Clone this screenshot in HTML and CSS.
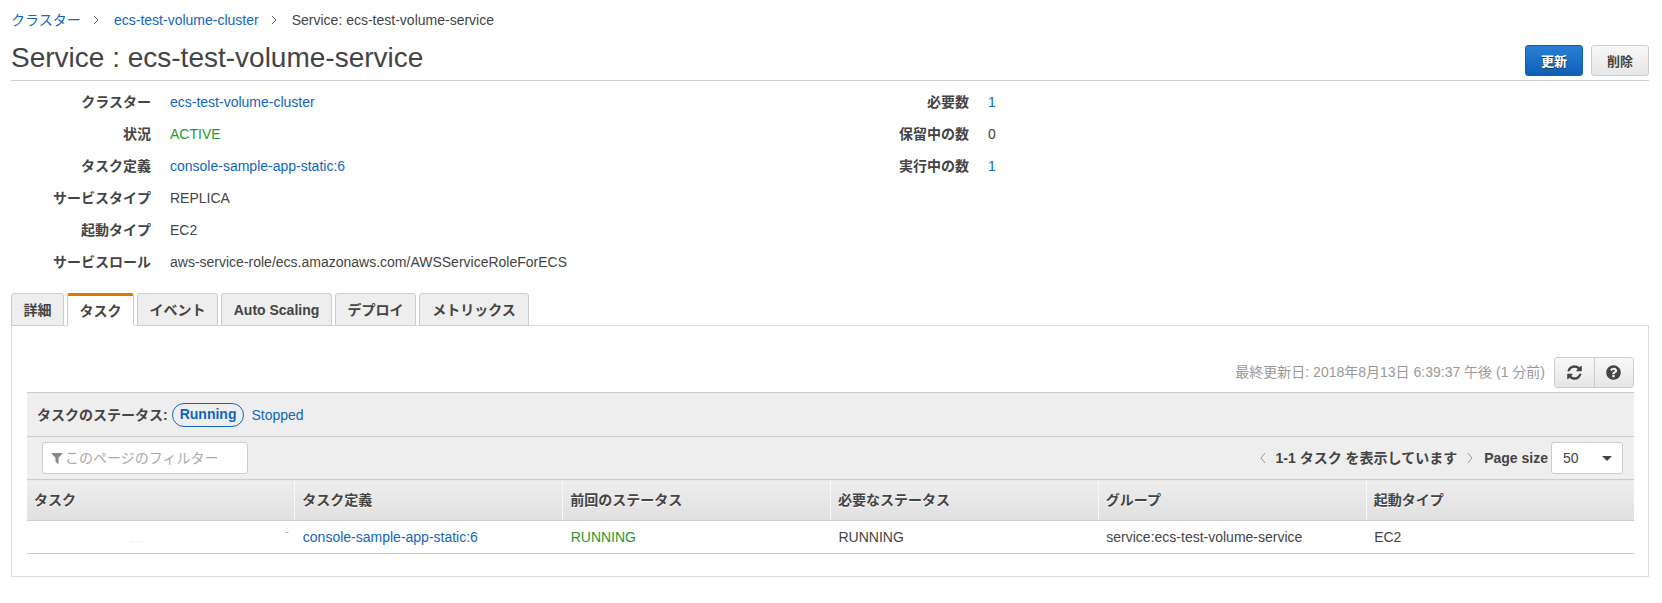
FILE: index.html
```html
<!DOCTYPE html>
<html lang="ja">
<head>
    <meta charset="UTF-8">
    <title>Service : ecs-test-volume-service</title>
    <link rel="stylesheet" href="styles.css">
</head>
<body>

    <div class="breadcrumb">
        <a href="#" class="crumb-first">クラスター</a>
        <svg class="crumb-sep" viewBox="0 0 8 10"><path d="M2 1l4 4-4 4" /></svg>
        <a href="#">ecs-test-volume-cluster</a>
        <svg class="crumb-sep" viewBox="0 0 8 10"><path d="M2 1l4 4-4 4" /></svg>
        <span>Service: ecs-test-volume-service</span>
    </div>

    <div class="page-head">
        <h1>Service : ecs-test-volume-service</h1>
        <div class="head-buttons">
            <button class="btn btn-primary">更新</button>
            <button class="btn">削除</button>
        </div>
    </div>

    <div class="detalles">
        <dl class="det-col">
            <dt>クラスター</dt><dd><a href="#">ecs-test-volume-cluster</a></dd>
            <dt>状況</dt><dd class="verde">ACTIVE</dd>
            <dt>タスク定義</dt><dd><a href="#">console-sample-app-static:6</a></dd>
            <dt>サービスタイプ</dt><dd>REPLICA</dd>
            <dt>起動タイプ</dt><dd>EC2</dd>
            <dt>サービスロール</dt><dd>aws-service-role/ecs.amazonaws.com/AWSServiceRoleForECS</dd>
        </dl>
        <dl class="det-col">
            <dt>必要数</dt><dd><a href="#">1</a></dd>
            <dt>保留中の数</dt><dd>0</dd>
            <dt>実行中の数</dt><dd><a href="#">1</a></dd>
        </dl>
    </div>

    <div class="tabs">
        <div class="tab tab-detalle">詳細</div>
        <div class="tab tab-active">タスク</div>
        <div class="tab tab-evento">イベント</div>
        <div class="tab tab-auto">Auto Scaling</div>
        <div class="tab tab-deploy">デプロイ</div>
        <div class="tab tab-metric">メトリックス</div>
    </div>

    <div class="panel">
        <div class="refresh-row">
            <span class="updated">最終更新日: 2018年8月13日 6:39:37 午後 (1 分前)</span>
            <div class="btn-group">
                <button class="icon-btn">
                    <svg viewBox="0 0 1792 1792"><path d="M1639 1056q0 5-1 7-64 268-268 434.5t-478 166.5q-146 0-282.5-55t-243.5-157l-129 129q-19 19-45 19t-45-19-19-45v-448q0-26 19-45t45-19h448q26 0 45 19t19 45-19 45l-137 137q71 66 161 102t187 36q134 0 250-65t186-179q11-17 53-117 8-23 30-23h192q13 0 22.5 9.5t9.5 22.5zm25-800v448q0 26-19 45t-45 19h-448q-26 0-45-19t-19-45 19-45l138-138q-148-137-349-137-134 0-250 65t-186 179q-11 17-53 117-8 23-30 23h-199q-13 0-22.5-9.5t-9.5-22.5v-7q65-268 270-434.5t480-166.5q146 0 284 55.5t245 156.5l130-129q19-19 45-19t45 19 19 45z"/></svg>
                </button>
                <button class="icon-btn">
                    <svg viewBox="0 0 1792 1792"><path d="M1024 1376v-192q0-14-9-23t-23-9h-192q-14 0-23 9t-9 23v192q0 14 9 23t23 9h192q14 0 23-9t9-23zm256-672q0-88-55.5-163t-138.5-116-170-41q-243 0-371 213-15 24 8 42l132 100q7 6 19 6 16 0 25-12 53-68 86-92 34-24 86-24 48 0 85.5 26t37.5 59q0 38-20 61t-68 45q-63 28-115.5 86.5t-52.5 125.5v36q0 14 9 23t23 9h192q14 0 23-9t9-23q0-19 21.5-49.5t54.5-49.5q32-18 49-28.5t46-35 44.5-48 28-60.5 12.5-81zm384 192q0 209-103 385.5t-279.5 279.5-385.5 103-385.5-103-279.5-279.5-103-385.5 103-385.5 279.5-279.5 385.5-103 385.5 103 279.5 279.5 103 385.5z"/></svg>
                </button>
            </div>
        </div>

        <div class="status-bar">
            <strong>タスクのステータス:</strong>
            <span class="pill">Running</span>
            <a href="#">Stopped</a>
        </div>

        <div class="filter-bar">
            <div class="filter-input">
                <svg viewBox="0 0 1792 1792"><path d="M1595 295q17 41-14 70l-493 493v742q0 42-39 59-13 5-25 5-27 0-45-19l-256-256q-19-19-19-45v-486l-493-493q-31-29-14-70 17-39 59-39h1280q42 0 59 39z"/></svg>
                <span>このページのフィルター</span>
            </div>
            <div class="pager">
                <svg class="pager-arrow" viewBox="0 0 8 12"><path d="M6 1L2 6l4 5" /></svg>
                <strong class="pager-text">1-1 タスク を表示しています</strong>
                <svg class="pager-arrow" viewBox="0 0 8 12"><path d="M2 1l4 5-4 5" /></svg>
                <strong class="page-size">Page size</strong>
                <div class="select"><span>50</span><i class="caret"></i></div>
            </div>
        </div>

        <table class="tabla">
            <thead>
                <tr>
                    <th>タスク</th>
                    <th>タスク定義</th>
                    <th>前回のステータス</th>
                    <th>必要なステータス</th>
                    <th>グループ</th>
                    <th>起動タイプ</th>
                </tr>
            </thead>
            <tbody>
                <tr>
                    <td class="oculto"><span class="resto">.....</span><span class="resto-fin">-</span></td>
                    <td><a href="#">console-sample-app-static:6</a></td>
                    <td class="verde">RUNNING</td>
                    <td>RUNNING</td>
                    <td>service:ecs-test-volume-service</td>
                    <td>EC2</td>
                </tr>
            </tbody>
        </table>
    </div>

</body>
</html>
```

FILE: styles.css
```css
* {
    box-sizing: border-box;
}

body {
    font-family: "Liberation Sans", "Noto Sans CJK JP", sans-serif;
    font-size: 14px;
    line-height: 20px;
    color: #444;
    margin: 0;
    padding: 0 13px 0 11px;
    background-color: #fff;
}

a {
    color: #1166bb;
    text-decoration: none;
}

.verde {
    color: #1d9a2e;
}

.breadcrumb {
    display: flex;
    align-items: center;
    height: 20px;
    margin-top: 10px;
    white-space: nowrap;
}

.crumb-first {
    width: 70px;
}

.crumb-sep {
    width: 8px;
    height: 10px;
    margin: 0 14px 0 11px;
    fill: none;
    stroke: #666;
    stroke-width: 1;
}

.page-head {
    display: flex;
    justify-content: space-between;
    align-items: flex-end;
    height: 51px;
    padding-bottom: 4px;
    border-bottom: 1px solid #ccc;
}

h1 {
    margin: 0;
    font-size: 28px;
    line-height: 36px;
    font-weight: 400;
}

.head-buttons {
    display: flex;
    gap: 8px;
}

.btn {
    width: 58px;
    height: 31px;
    padding: 0;
    font: bold 13px "Liberation Sans", "Noto Sans CJK JP", sans-serif;
    color: #444;
    background: linear-gradient(#f8f8f8, #e6e6e6);
    border: 1px solid #ccc;
    border-radius: 3px;
}

.btn-primary {
    color: #fff;
    background: linear-gradient(#2a7fd5, #0d60b5);
    border-color: #125fa8;
    text-shadow: 0 1px 1px #333;
}

.detalles {
    display: flex;
    margin-top: 5px;
    height: 192px;
}

.det-col {
    display: grid;
    grid-template-columns: 140px 1fr;
    grid-auto-rows: 32px;
    column-gap: 19px;
    align-items: center;
    align-content: start;
    width: 818px;
    margin: 0;
}

.det-col dt {
    text-align: right;
    font-weight: 700;
}

.det-col dd {
    margin: 0;
}

.tabs {
    display: flex;
    gap: 3px;
    margin-top: 15px;
    height: 33px;
    position: relative;
    z-index: 1;
}

.tab {
    padding: 0;
    text-align: center;
    line-height: 32px;
    font-weight: 700;
    font-size: 14px;
    color: #444;
    background: #eee;
    border: 1px solid #ccc;
    border-radius: 3px 3px 0 0;
}

.tab-detalle {
    width: 53px;
}

.tab-active {
    width: 67px;
    background: #fff;
    border-top: 3px solid #dd7700;
    border-bottom-color: #fff;
    line-height: 30px;
}

.tab-evento {
    width: 81px;
}

.tab-auto {
    width: 111px;
}

.tab-deploy {
    width: 81px;
}

.tab-metric {
    width: 110px;
}

.panel {
    margin-top: -1px;
    height: 252px;
    padding: 0 14px 0 15px;
    border: 1px solid #ddd;
}

.refresh-row {
    display: flex;
    justify-content: flex-end;
    align-items: center;
    gap: 9px;
    height: 66px;
    padding-top: 26px;
}

.updated {
    color: #999;
}

.btn-group {
    display: flex;
    width: 80px;
    height: 31px;
    border: 1px solid #ccc;
    border-radius: 3px;
    overflow: hidden;
}

.icon-btn {
    flex: 1;
    padding: 0;
    background: linear-gradient(#f8f8f8, #e6e6e6);
    border: none;
}

.icon-btn + .icon-btn {
    border-left: 1px solid #ccc;
}

.icon-btn svg {
    display: block;
    width: 17px;
    height: 17px;
    margin: 0 auto;
    fill: #444;
}

.status-bar {
    display: flex;
    align-items: center;
    height: 45px;
    padding-left: 10px;
    background: #eee;
    border-top: 1px solid #ccc;
    border-bottom: 1px solid #ccc;
}

.pill {
    margin: 0 7px 0 4px;
    padding: 0 7px;
    height: 24px;
    line-height: 21px;
    font-weight: 700;
    color: #1166bb;
    border: 1px solid #1166bb;
    border-radius: 12px;
}

.filter-bar {
    display: flex;
    justify-content: space-between;
    align-items: center;
    height: 42px;
    padding: 0 11px 0 15px;
    background: #eee;
}

.filter-input {
    display: flex;
    align-items: center;
    gap: 1px;
    width: 206px;
    height: 32px;
    padding-left: 7px;
    color: #aaa;
    background: #fff;
    border: 1px solid #ccc;
    border-radius: 3px;
}

.filter-input svg {
    width: 14px;
    height: 14px;
    fill: #888;
}

.pager {
    display: flex;
    align-items: center;
}

.pager-arrow {
    width: 8px;
    height: 12px;
    fill: none;
    stroke: #999;
    stroke-width: 1;
}

.pager-text {
    margin: 0 9px;
}

.page-size {
    margin: 0 3px 0 10px;
}

.select {
    display: flex;
    justify-content: space-between;
    align-items: center;
    width: 72px;
    height: 32px;
    padding: 0 10px 0 11px;
    background: #fff;
    border: 1px solid #ccc;
    border-radius: 3px;
}

.caret {
    border-left: 5px solid transparent;
    border-right: 5px solid transparent;
    border-top: 5px solid #444;
}

.tabla {
    width: 100%;
    border-collapse: collapse;
    table-layout: fixed;
    border-bottom: 1px solid #ccc;
}

.tabla th {
    height: 41px;
    padding: 0 7px;
    text-align: left;
    font-weight: 700;
    color: #444;
    text-shadow: 0 1px 0 #fff;
    background: linear-gradient(#eee, #e0e0e0);
    border-top: 1px solid #ccc;
    border-bottom: 1px solid #ccc;
    border-left: 1px solid #f8f8f8;
}

.tabla th:first-child {
    border-left: none;
}

.tabla td {
    height: 33px;
    padding: 0 8px;
}

.oculto {
    position: relative;
}

.resto {
    position: absolute;
    left: 103px;
    top: 8px;
    font-size: 9px;
    color: #d4dfee;
}

.resto-fin {
    position: absolute;
    right: 6px;
    top: 1px;
    font-size: 10px;
    color: #8aa;
}
```
